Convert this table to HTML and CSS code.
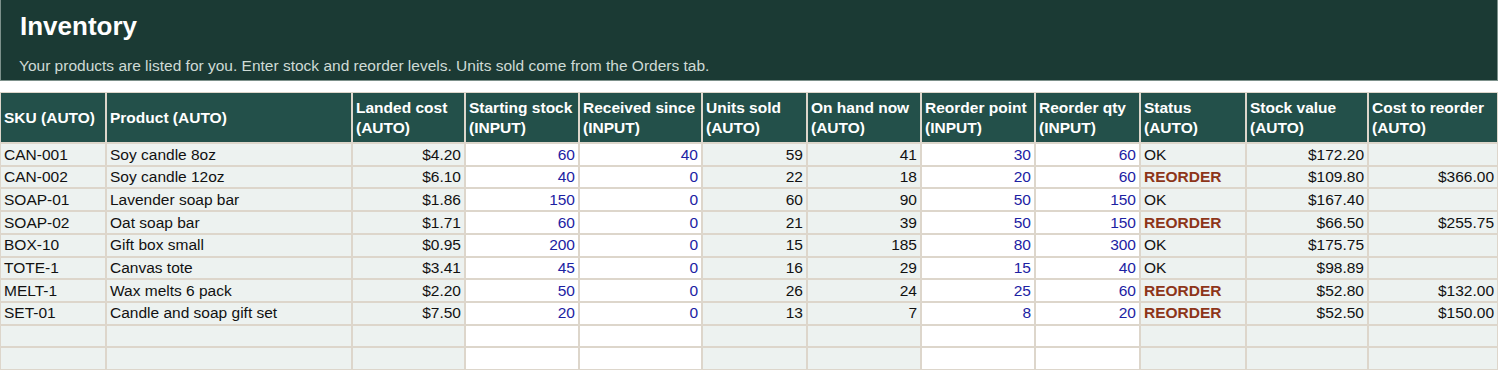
FILE: index.html
```html
<!DOCTYPE html>
<html lang="en">
<head>
<meta charset="utf-8">
<title>Inventory</title>
<link rel="stylesheet" href="styles.css">
</head>
<body>
<div class="page">
  <header class="banner">
    <h1 class="title">Inventory</h1>
    <p class="subtitle">Your products are listed for you. Enter stock and reorder levels. Units sold come from the Orders tab.</p>
  </header>
  <table class="grid">
    <colgroup>
      <col class="c-sku"><col class="c-product"><col class="c-landed"><col class="c-start">
      <col class="c-recv"><col class="c-sold"><col class="c-onhand"><col class="c-rpoint">
      <col class="c-rqty"><col class="c-status"><col class="c-value"><col class="c-cost">
    </colgroup>
    <thead>
      <tr>
        <th>SKU (AUTO)</th>
        <th>Product (AUTO)</th>
        <th>Landed cost<br>(AUTO)</th>
        <th>Starting stock<br>(INPUT)</th>
        <th>Received since<br>(INPUT)</th>
        <th>Units sold<br>(AUTO)</th>
        <th>On hand now<br>(AUTO)</th>
        <th>Reorder point<br>(INPUT)</th>
        <th>Reorder qty<br>(INPUT)</th>
        <th>Status<br>(AUTO)</th>
        <th>Stock value<br>(AUTO)</th>
        <th>Cost to reorder<br>(AUTO)</th>
      </tr>
    </thead>
    <tbody>
      <tr>
        <td class="auto">CAN-001</td><td class="auto">Soy candle 8oz</td><td class="auto num">$4.20</td>
        <td class="input num">60</td><td class="input num">40</td><td class="auto num">59</td><td class="auto num">41</td>
        <td class="input num">30</td><td class="input num">60</td><td class="auto">OK</td><td class="auto num">$172.20</td><td class="auto num"></td>
      </tr>
      <tr>
        <td class="auto">CAN-002</td><td class="auto">Soy candle 12oz</td><td class="auto num">$6.10</td>
        <td class="input num">40</td><td class="input num">0</td><td class="auto num">22</td><td class="auto num">18</td>
        <td class="input num">20</td><td class="input num">60</td><td class="auto reorder">REORDER</td><td class="auto num">$109.80</td><td class="auto num">$366.00</td>
      </tr>
      <tr>
        <td class="auto">SOAP-01</td><td class="auto">Lavender soap bar</td><td class="auto num">$1.86</td>
        <td class="input num">150</td><td class="input num">0</td><td class="auto num">60</td><td class="auto num">90</td>
        <td class="input num">50</td><td class="input num">150</td><td class="auto">OK</td><td class="auto num">$167.40</td><td class="auto num"></td>
      </tr>
      <tr>
        <td class="auto">SOAP-02</td><td class="auto">Oat soap bar</td><td class="auto num">$1.71</td>
        <td class="input num">60</td><td class="input num">0</td><td class="auto num">21</td><td class="auto num">39</td>
        <td class="input num">50</td><td class="input num">150</td><td class="auto reorder">REORDER</td><td class="auto num">$66.50</td><td class="auto num">$255.75</td>
      </tr>
      <tr>
        <td class="auto">BOX-10</td><td class="auto">Gift box small</td><td class="auto num">$0.95</td>
        <td class="input num">200</td><td class="input num">0</td><td class="auto num">15</td><td class="auto num">185</td>
        <td class="input num">80</td><td class="input num">300</td><td class="auto">OK</td><td class="auto num">$175.75</td><td class="auto num"></td>
      </tr>
      <tr>
        <td class="auto">TOTE-1</td><td class="auto">Canvas tote</td><td class="auto num">$3.41</td>
        <td class="input num">45</td><td class="input num">0</td><td class="auto num">16</td><td class="auto num">29</td>
        <td class="input num">15</td><td class="input num">40</td><td class="auto">OK</td><td class="auto num">$98.89</td><td class="auto num"></td>
      </tr>
      <tr>
        <td class="auto">MELT-1</td><td class="auto">Wax melts 6 pack</td><td class="auto num">$2.20</td>
        <td class="input num">50</td><td class="input num">0</td><td class="auto num">26</td><td class="auto num">24</td>
        <td class="input num">25</td><td class="input num">60</td><td class="auto reorder">REORDER</td><td class="auto num">$52.80</td><td class="auto num">$132.00</td>
      </tr>
      <tr>
        <td class="auto">SET-01</td><td class="auto">Candle and soap gift set</td><td class="auto num">$7.50</td>
        <td class="input num">20</td><td class="input num">0</td><td class="auto num">13</td><td class="auto num">7</td>
        <td class="input num">8</td><td class="input num">20</td><td class="auto reorder">REORDER</td><td class="auto num">$52.50</td><td class="auto num">$150.00</td>
      </tr>
      <tr class="empty">
        <td class="auto"></td><td class="auto"></td><td class="auto"></td><td class="input"></td><td class="input"></td><td class="auto"></td>
        <td class="auto"></td><td class="input"></td><td class="input"></td><td class="auto"></td><td class="auto"></td><td class="auto"></td>
      </tr>
      <tr class="empty">
        <td class="auto"></td><td class="auto"></td><td class="auto"></td><td class="input"></td><td class="input"></td><td class="auto"></td>
        <td class="auto"></td><td class="input"></td><td class="input"></td><td class="auto"></td><td class="auto"></td><td class="auto"></td>
      </tr>
    </tbody>
  </table>
</div>
</body>
</html>
```
FILE: styles.css
```css
html, body {
  margin: 0;
  padding: 0;
  background: #ffffff;
}

body {
  font-family: "Liberation Sans", Arial, sans-serif;
  color: #111111;
}

.page {
  width: 1498px;
  display: flex;
  flex-direction: column;
  gap: 11px;
}

.banner {
  background: #1b3a34;
  border: 1px solid #7d918b;
  border-top: 0;
  padding: 11px 18px 5px 18px;
}

.title {
  margin: 0;
  font-size: 26px;
  line-height: 30px;
  font-weight: bold;
  color: #ffffff;
  padding-left: 1px;
}

.subtitle {
  margin: 16px 0 0 0;
  font-size: 15.5px;
  line-height: 18px;
  color: #cfdbd6;
}

.grid {
  width: 1498px;
  table-layout: fixed;
  border-collapse: separate;
  border-spacing: 0;
  font-size: 15.5px;
}

.c-sku { width: 106px; }
.c-product { width: 246px; }
.c-landed { width: 113px; }
.c-start { width: 114px; }
.c-recv { width: 123px; }
.c-sold { width: 105px; }
.c-onhand { width: 114px; }
.c-rpoint { width: 114px; }
.c-rqty { width: 105px; }
.c-status { width: 106px; }
.c-value { width: 122px; }
.c-cost { width: 130px; }

.grid th,
.grid td {
  border: 1px solid #ddd6cb;
  padding: 1px 3px;
  overflow: hidden;
  white-space: nowrap;
}

.grid th {
  background: #23504a;
  color: #ffffff;
  font-weight: bold;
  text-align: left;
  vertical-align: middle;
  line-height: 20px;
  padding-top: 4.5px;
  padding-bottom: 4.5px;
}

.grid td {
  line-height: 18.7px;
  height: 18.7px;
  padding-top: 1.5px;
  padding-bottom: 0.5px;
  vertical-align: middle;
}

.auto {
  background: #edf2f0;
  color: #111111;
}

.input {
  background: #ffffff;
  color: #1c22a3;
}

.num {
  text-align: right;
}

.reorder {
  color: #8d3519;
  font-weight: bold;
}
```
